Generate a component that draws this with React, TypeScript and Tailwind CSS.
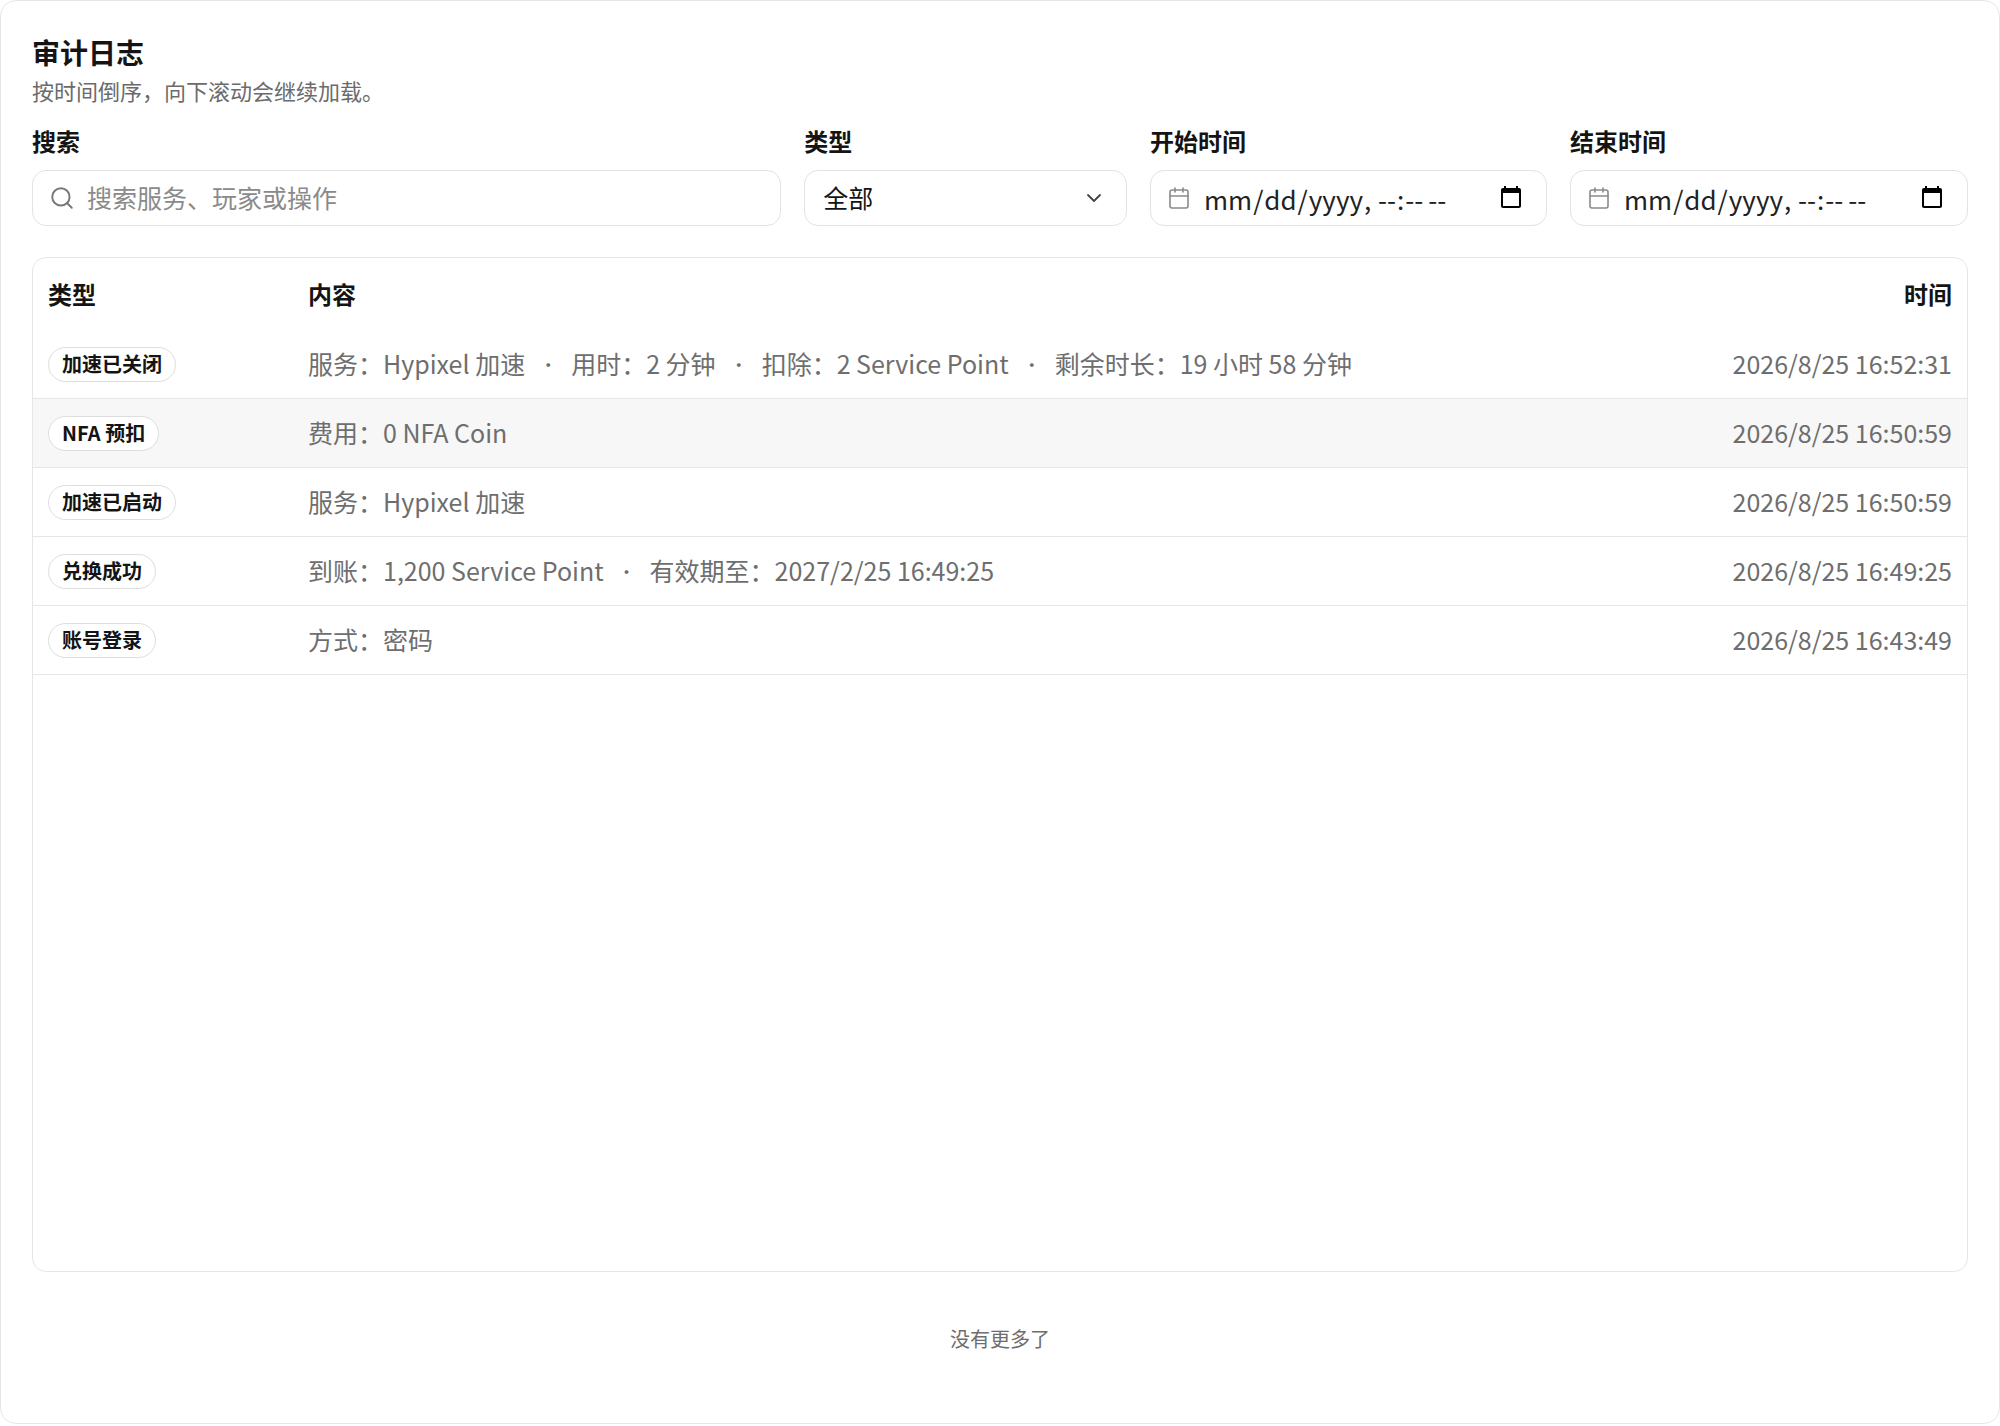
import { Search, ChevronDown, Calendar } from 'lucide-react'

const rows = [
  { type: '加速已关闭', content: ['服务：Hypixel 加速', '用时：2 分钟', '扣除：2 Service Point', '剩余时长：19 小时 58 分钟'], time: '2026/8/25 16:52:31' },
  { type: 'NFA 预扣', content: ['费用：0 NFA Coin'], time: '2026/8/25 16:50:59', hover: true },
  { type: '加速已启动', content: ['服务：Hypixel 加速'], time: '2026/8/25 16:50:59' },
  { type: '兑换成功', content: ['到账：1,200 Service Point', '有效期至：2027/2/25 16:49:25'], time: '2026/8/25 16:49:25' },
  { type: '账号登录', content: ['方式：密码'], time: '2026/8/25 16:43:49' },
]

function DateField() {
  return (
    <div className="flex h-[56px] items-center gap-3 rounded-[14px] border border-[#e3e3e3] bg-white pl-4 pr-5">
      <Calendar className="h-[24px] w-[24px] shrink-0 text-[#8a8a8a]" strokeWidth={1.6} />
      <input
        type="datetime-local"
        className="min-w-0 flex-1 bg-transparent text-[26px] text-[#222] outline-none"
      />
    </div>
  )
}

export default function App() {
  return (
    <div
      className="min-h-[1426px] w-[2000px] bg-white"
      style={{ fontFamily: '"Noto Sans CJK SC", "Noto Sans", sans-serif' }}
    >
      <div className="flex h-[1424px] flex-col rounded-[16px] border border-[#e6e6e6] px-[31px] pt-[30px]">
        <h1 className="text-[28px] font-semibold leading-[42px] text-[#141414]">审计日志</h1>
        <p className="mt-[1px] text-[22px] leading-[32px] text-[#6b6b6b]">按时间倒序，向下滚动会继续加载。</p>

        <div className="mt-[19px] flex gap-[23px]">
          <div className="flex w-[752px] flex-col gap-[13px]">
            <label className="text-[24px] font-semibold leading-[32px] text-[#141414]">搜索</label>
            <div className="flex h-[56px] items-center gap-3 rounded-[14px] border border-[#e3e3e3] px-4">
              <Search className="h-[26px] w-[26px] text-[#777]" strokeWidth={1.8} />
              <span className="text-[25px] text-[#8a8a8a]">搜索服务、玩家或操作</span>
            </div>
          </div>
          <div className="flex w-[324px] flex-col gap-[13px]">
            <label className="text-[24px] font-semibold leading-[32px] text-[#141414]">类型</label>
            <div className="flex h-[56px] items-center justify-between rounded-[14px] border border-[#e3e3e3] pl-[18px] pr-[20px]">
              <span className="text-[25px] text-[#141414]">全部</span>
              <ChevronDown className="h-[24px] w-[24px] text-[#444]" strokeWidth={1.8} />
            </div>
          </div>
          <div className="flex w-[397px] flex-col gap-[13px]">
            <label className="text-[24px] font-semibold leading-[32px] text-[#141414]">开始时间</label>
            <DateField />
          </div>
          <div className="flex w-[398px] flex-col gap-[13px]">
            <label className="text-[24px] font-semibold leading-[32px] text-[#141414]">结束时间</label>
            <DateField />
          </div>
        </div>

        <div className="mt-[31px] h-[1015px] overflow-hidden rounded-[14px] border border-[#e6e6e6]">
          <div className="flex h-[72px] items-center px-[15px] text-[24px] font-semibold text-[#141414]">
            <div className="w-[260px]">类型</div>
            <div className="flex-1">内容</div>
            <div>时间</div>
          </div>
          {rows.map((r) => (
            <div
              key={r.time + r.type}
              className={`flex h-[69px] items-center border-b border-[#e6e6e6] px-[15px] ${r.hover ? 'bg-[#f7f7f7]' : ''}`}
            >
              <div className="w-[260px]">
                <span className="inline-flex h-[35px] items-center rounded-full border border-[#dedede] bg-white px-[13px] text-[20px] font-semibold text-[#141414]">
                  {r.type}
                </span>
              </div>
              <div className="flex flex-1 items-center gap-[14px] text-[25px] text-[#6e6e6e]">
                {r.content.map((c, i) => (
                  <span key={i} className="flex items-center gap-[14px]">
                    {i > 0 && <span className="text-[18px]">•</span>}
                    {c}
                  </span>
                ))}
              </div>
              <div className="text-[25px] text-[#6e6e6e]">{r.time}</div>
            </div>
          ))}
        </div>

        <div className="mt-[52px] text-center text-[20px] text-[#6e6e6e]">没有更多了</div>
      </div>
    </div>
  )
}
